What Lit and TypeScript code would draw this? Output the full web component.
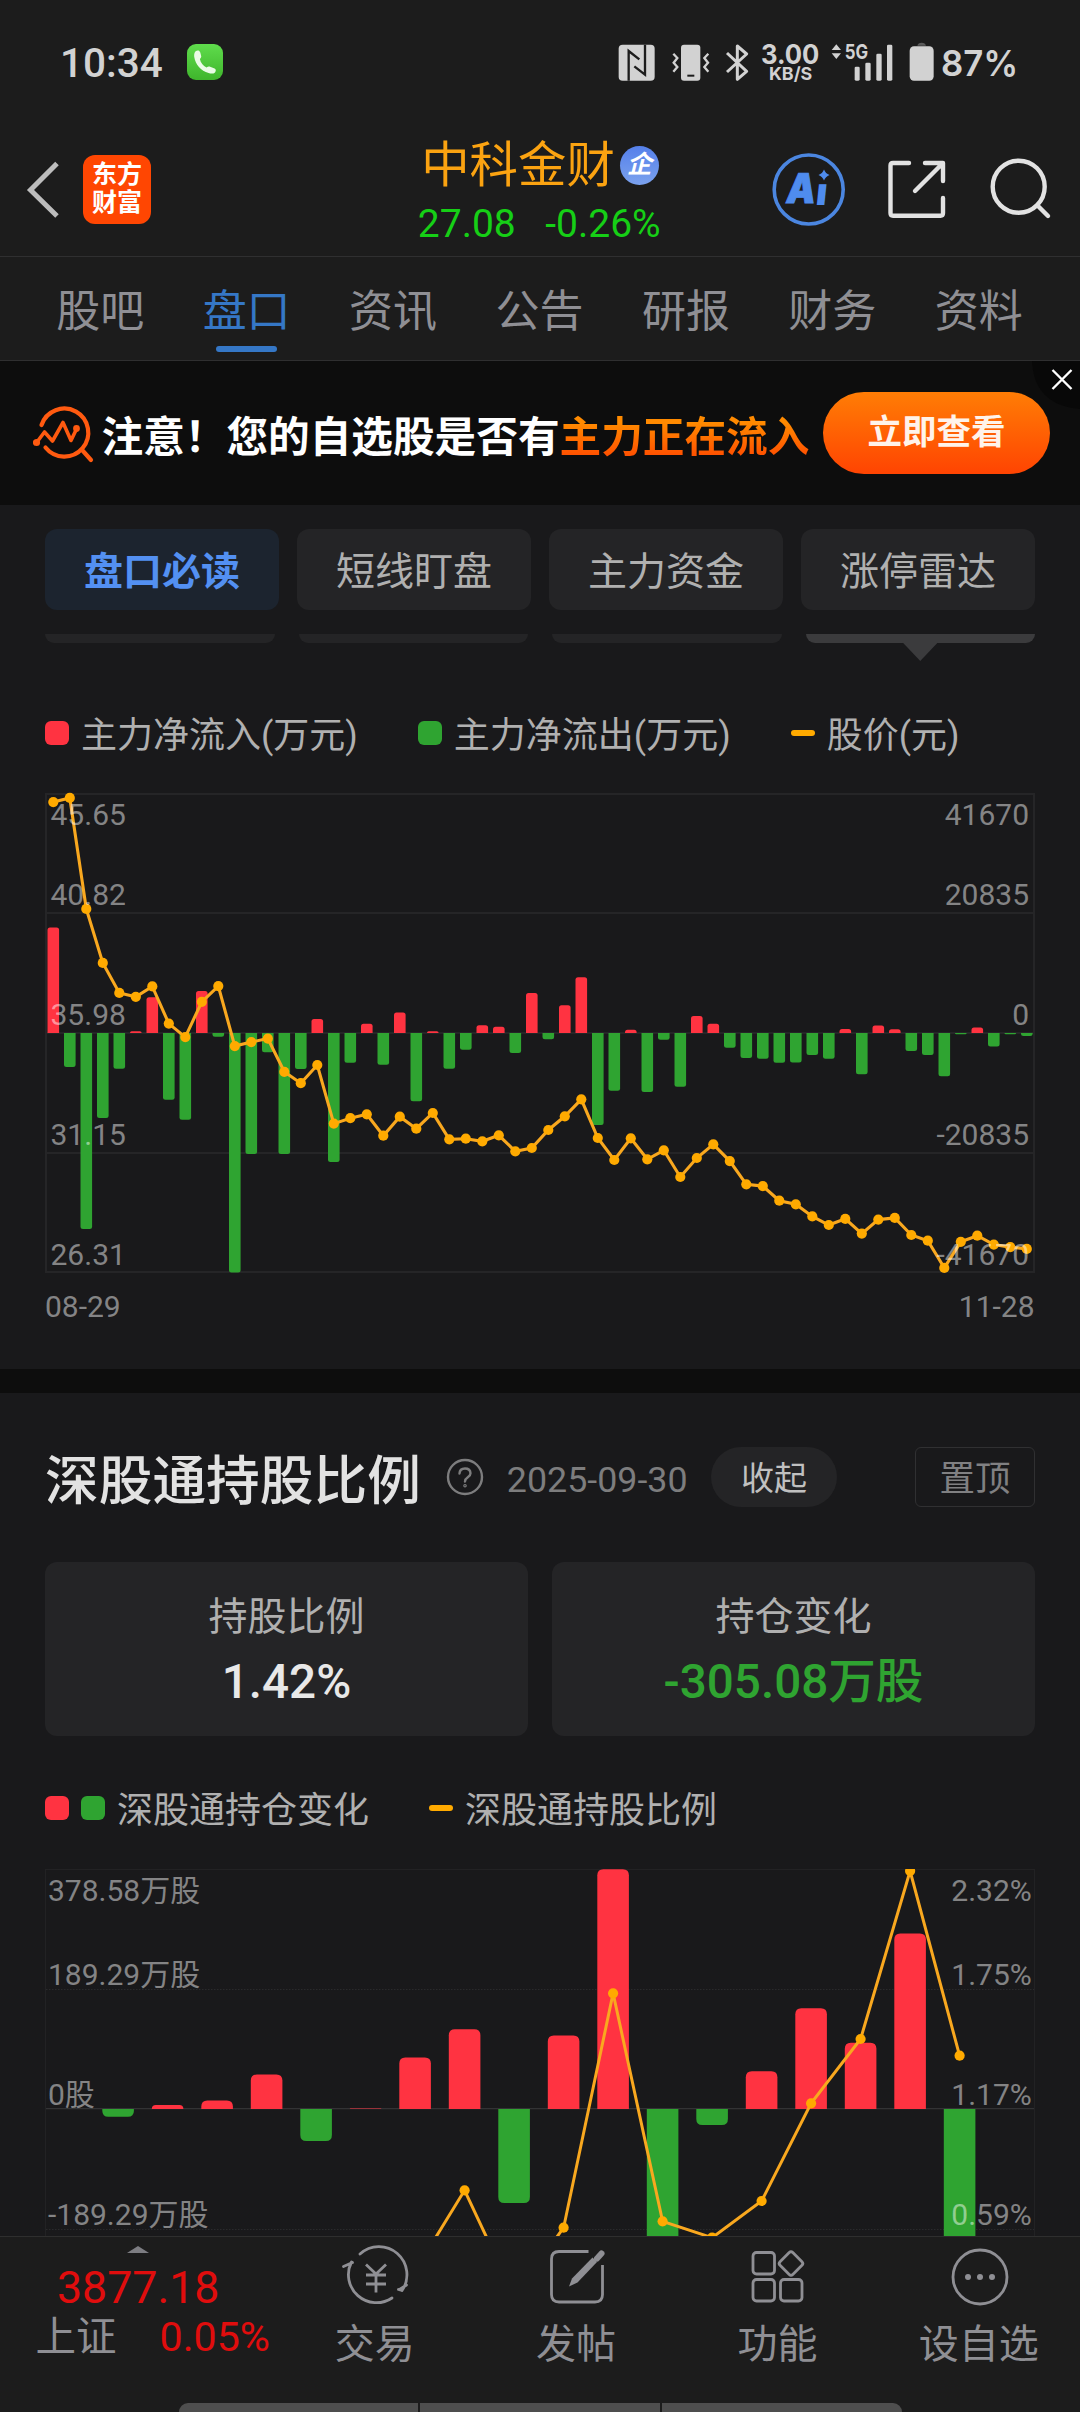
import { LitElement, html, svg, css } from "lit";
import { customElement } from "lit/decorators.js";
import { classMap } from "lit/directives/class-map.js";

const FONT = css`Roboto, "Noto Sans CJK SC", sans-serif`;

// Net main-force flow per trading day, in chart pixels above (+) or below (-) zero.
const FLOW = [
  105.4, -34, -196, -85, -35.7, 1.7, 35.7, -66.8, -86.8, 42, -3.8, -239.5, -121, -19.3, -121, -36, 14, -129, -29.7, 9.3,
  -31.7, 20.5, -68.3, 1.7, -35.7, -16.8, 7.8, 6.2, -20, 40, -6.3, 27.7, 55.7, -92, -57.7, 3.3, -59, -6.8, -53.7, 17,
  9.3, -14.8, -25, -25.8, -29.8, -29.4, -22, -25.8, 4, -41.2, 7.6, 3.8, -18, -22, -43.2, -1.3, 5.6, -13.4, -1.3, -3,
];
// Share price, as distance in pixels below the top frame line.
const PRICE = [
  8.1, 3.9, 114.9, 168.9, 198.9, 202.8, 192.4, 229.6, 243.1, 207.8, 192.1, 252.1, 248.1, 244.6, 277.8, 289.2, 271, 329.6,
  324.2, 320.3, 341.7, 322.7, 334.7, 319, 345.3, 344.7, 347.3, 341.3, 357.3, 354, 336, 322.3, 305.3, 344, 366, 344.3,
  365.3, 356.3, 383, 364, 350.3, 367.1, 390.3, 392.1, 406.7, 410.3, 422.4, 431, 424.9, 439.6, 425.6, 423.9, 441, 446.7,
  473.9, 447.8, 441.7, 450.6, 453.1, 454.9,
];
const HOLD = [0, -7.7, 4, 8.5, 34.5, -32, 0.6, 51.5, 79.7, -94, 73.5, 239.7, -160, -16, 37.8, 100.7, 66.3, 175.5, -160];
const RATIO: [number, number][] = [
  [7, 402], [8, 321.3], [9, 427], [10, 358.7], [11, 124.3], [12, 352.3], [13, 368.7], [14, 332], [15, 234.3], [16, 170],
  [17, 2], [18, 186.7],
];

const RED = "#ff3341";
const GREEN = "#2fa431";
const GOLD = "#ffaa00";

/** Bar whose outer end is rounded and whose base sits square on the zero line. */
function bar(cx: number, zero: number, w: number, v: number, r: number) {
  const h = Math.abs(v);
  const k = Math.min(r, h);
  const s = v > 0 ? -1 : 1;
  const x0 = cx - w / 2;
  const x1 = cx + w / 2;
  const tip = zero + s * h;
  return svg`<path fill=${v > 0 ? RED : GREEN} d="M${x0} ${zero}V${tip - s * k}Q${x0} ${tip} ${x0 + k} ${tip}H${x1 - k}Q${x1} ${tip} ${x1} ${tip - s * k}V${zero}Z"></path>`;
}

@customElement("flow-chart")
class FlowChart extends LitElement {
  static styles = css`
    :host { display: block; }
    svg { display: block; }
    text { font: 30px ${FONT}; fill: #fff; fill-opacity: 0.47; }
    .end { text-anchor: end; }
  `;
  render() {
    const x = (i: number) => 8.3 + 16.5 * i;
    const y = (v: number) => v + 4;
    const left = ["45.65", "40.82", "35.98", "31.15", "26.31"];
    const right = ["41670", "20835", "0", "-20835", "-41670"];
    const base = [34.7, 115, 235, 355, 475];
    return html`<svg width="990" height="540" viewBox="0 0 990 540">
      <g stroke="#252527" stroke-width="2" fill="none">
        <rect x="1" y="4" width="988" height="478"></rect>
        <path d="M1 123H989M1 243H989M1 363H989"></path>
      </g>
      ${FLOW.map((v, i) => bar(x(i), 243, 11.6, v, 2.5))}
      <polyline fill="none" stroke="#f9a81f" stroke-width="3.1" points=${PRICE.map((v, i) => `${x(i)},${y(v)}`).join(" ")}></polyline>
      ${PRICE.map((v, i) => svg`<circle cx=${x(i)} cy=${y(v)} r="5.1" fill=${GOLD}></circle>`)}
      ${left.map((t, i) => svg`<text x="5.5" y=${base[i]}>${t}</text>`)}
      ${right.map((t, i) => svg`<text class="end" x="984" y=${base[i]}>${t}</text>`)}
      <text x="0" y="527">08-29</text>
      <text class="end" x="989.5" y="527">11-28</text>
    </svg>`;
  }
}

@customElement("holding-chart")
class HoldingChart extends LitElement {
  static styles = css`
    :host { display: block; }
    svg { display: block; overflow: hidden; }
    text { font: 30px ${FONT}; fill: #fff; fill-opacity: 0.47; }
    .end { text-anchor: end; }
  `;
  render() {
    const x = (i: number) => 23.6 + 49.5 * i;
    const left = ["378.58万股", "189.29万股", "0股", "-189.29万股"];
    const right = ["2.32%", "1.75%", "1.17%", "0.59%"];
    const base = [32.3, 116.3, 236, 356];
    return html`<svg width="990" height="367" viewBox="0 0 990 367">
      <rect x="0.5" y="0.5" width="989" height="480" fill="none" stroke="#222224"></rect>
      <path d="M1 120.5H989M1 360.5H989" stroke="#2a2a2c" stroke-dasharray="1.5 1.5"></path>
      <path d="M1 239.7H989" stroke="#3a3a3c"></path>
      ${HOLD.map((v, i) => (v ? bar(x(i), 240, 31.6, v, 6) : null))}
      <polyline fill="none" stroke="#f9a81f" stroke-width="3" points=${RATIO.map(([i, v]) => `${x(i)},${v}`).join(" ")}></polyline>
      ${RATIO.map(([i, v]) => svg`<circle cx=${x(i)} cy=${v} r="5.1" fill=${GOLD}></circle>`)}
      ${left.map((t, i) => svg`<text x="3" y=${base[i]}>${t}</text>`)}
      ${right.map((t, i) => svg`<text class="end" x="986.8" y=${base[i]}>${t}</text>`)}
    </svg>`;
  }
}

@customElement("status-bar")
class StatusBar extends LitElement {
  static styles = css`
    :host { display: flex; align-items: center; height: 124px; padding: 0 47px 0 60px; box-sizing: border-box; color: #d2d2d2; }
    .time { font: 500 40.500px/48px ${FONT}; margin-right: 24.500px; padding-top: 2px; }
    .grow { flex: 1; }
    svg { display: block; overflow: visible; }
    .sys { font-family: Inter, sans-serif; font-weight: 600; }
    .sys.b { font-weight: 700; }
  `;
  render() {
    return html`
      <div class="time">10:34</div>
      <svg width="36" height="36" viewBox="0 0 36 36">
        <defs><linearGradient id="g" x1="0" y1="0" x2="0" y2="1"><stop offset="0" stop-color="#5fdc4c"></stop><stop offset="1" stop-color="#3fb52c"></stop></linearGradient></defs>
        <rect width="36" height="36" rx="9" fill="url(#g)"></rect>
        <path fill="#eafbe6" d="M9 7c1.600-1 3.600-.6 4.300 1.500l.9 3.500c.2 1.300-.3 2-1.300 3 .7 4 3.200 6.800 6.600 8.500 1.400-1 2.300-1.300 3.600-.8l4.500 1.900c1.600.9 1.500 2.700.4 3.800-1.600 1.600-3.900 1.400-6.400.7C14 26.800 8.300 20.500 7.200 12.700 7 10.300 7.300 8.300 9 7Z"></path>
      </svg>
      <div class="grow"></div>
      <svg width="420" height="44" viewBox="40 43 1260 132" fill="#d2d2d2">
        <rect x="57" y="57" width="108" height="108" rx="12"></rect>
        <path d="M87 165V76L119 101M136 57V147L104 122" fill="none" stroke="#1c1c1c" stroke-width="7"></path>
        <rect x="244" y="57" width="58" height="108" rx="9"></rect>
        <rect x="263" y="147" width="21" height="6" fill="#1c1c1c"></rect>
        <path d="M221 84L233 97L222 111L233 124L221 138M326 84L314 97L325 111L314 124L326 138" fill="none" stroke="#d2d2d2" stroke-width="7"></path>
        <path d="M382 82L441 137L413 161V61L441 85L382 139" fill="none" stroke="#d2d2d2" stroke-width="9" stroke-linejoin="round"></path>
        <text class="sys b" x="484" y="115" font-size="80" textLength="175" lengthAdjust="spacingAndGlyphs">3.00</text>
        <text class="sys b" x="508" y="162" font-size="54" textLength="130" lengthAdjust="spacingAndGlyphs">KB/S</text>
        <path d="M696 73L710 56L724 73ZM696 83L710 100L724 83Z"></path>
        <text class="sys b" x="735" y="101" font-size="61" textLength="70" lengthAdjust="spacingAndGlyphs">5G</text>
        <rect x="765" y="123" width="15" height="42" rx="4"></rect>
        <rect x="797" y="111" width="16" height="54" rx="4"></rect>
        <rect x="830" y="84" width="16" height="81" rx="4"></rect>
        <rect x="862" y="57" width="16" height="108" rx="4"></rect>
        <path d="M953 60q2-9 13-9t13 9Z" fill="#5a5a5a"></path>
        <rect x="930" y="62" width="72" height="103" rx="13"></rect>
        <text class="sys" x="1024" y="151" font-size="108" textLength="232" lengthAdjust="spacingAndGlyphs">87%</text>
      </svg>`;
  }
}

@customElement("stock-header")
class StockHeader extends LitElement {
  static styles = css`
    :host { display: grid; grid-template-columns: 1fr auto 1fr; height: 133px; box-sizing: border-box; border-bottom: 1.5px solid #2f2f30; font-family: ${FONT}; }
    svg { display: block; }
    .side { display: flex; align-items: center; }
    .left { padding-left: 24px; gap: 21px; }
    .right { justify-content: flex-end; padding-right: 26px; }
    .logo { display: flex; flex-direction: column; justify-content: center; align-items: center; width: 68px; height: 69px; margin-top: -2px; border-radius: 12px; background: #ff4602; color: #fff; font: 700 25px/28px ${FONT}; }
    .mid { display: flex; flex-direction: column; align-items: center; }
    .name { display: flex; align-items: center; gap: 5px; height: 56px; margin-top: 14px; color: #fba311; font-size: 48.400px; line-height: 56px; }
    .badge { width: 39px; height: 39px; border-radius: 50%; background: linear-gradient(#5580ea, #7ba2ee); color: #fff; font: italic 700 25px/38px ${FONT}; text-align: center; margin-top: -1px; }
    .quote { display: flex; gap: 29.500px; color: #16cf16; font-size: 39px; line-height: 50px; margin: 5px 1.500px 0 0; }
  `;
  render() {
    return html`
      <div class="side left">
        <svg width="38" height="60" viewBox="0 0 38 60"><path d="M33 3.500L6.500 30L33 56" fill="none" stroke="#bdbdbd" stroke-width="5"></path></svg>
        <div class="logo"><span>东方</span><span>财富</span></div>
      </div>
      <div class="mid">
        <div class="name"><span>中科金财</span><span class="badge">企</span></div>
        <div class="quote"><span>27.08</span><span>-0.26%</span></div>
      </div>
      <div class="side right">
        <svg width="290" height="80" viewBox="764 150 290 80" fill="none" stroke-linecap="round">
          <circle cx="808.700" cy="189.500" r="34.500" stroke="#4b86e0" stroke-width="3.600"></circle>
          <g fill="#4f8cee">
            <text transform="translate(785 203) skewX(-8)" font-family="Inter, sans-serif" font-weight="900" font-size="41" textLength="29" lengthAdjust="spacingAndGlyphs" stroke="#4f8cee" stroke-width="1">A</text>
            <text transform="translate(815 205) skewX(-6)" font-family="Inter, sans-serif" font-weight="900" font-size="38">ı</text>
            <path d="M824 169.500q1.500 4 5.500 5.500q-4 1.500-5.500 5.500q-1.500-4-5.500-5.500q4-1.500 5.500-5.500Z"></path>
          </g>
          <g stroke="#e2e2e2" stroke-width="4.400" stroke-linejoin="round">
            <path d="M909 163H893Q890.500 163 890.500 165.500V213Q890.500 215.700 893 215.700H940.500Q943 215.700 943 213V198M925 163H943V181M942 164L915 191"></path>
            <circle cx="1018.700" cy="186.700" r="26"></circle>
            <path d="M1037.500 205.500L1048 216"></path>
          </g>
        </svg>
      </div>`;
  }
}

@customElement("promo-banner")
class PromoBanner extends LitElement {
  static styles = css`
    :host { display: flex; align-items: center; position: relative; height: 144px; padding: 0 30px 0 33px; box-sizing: border-box; background: #0d0d0d; font-family: ${FONT}; }
    svg { display: block; }
    .icon { margin-right: 6.500px; }
    .msg { flex: 1; white-space: nowrap; font-weight: 700; font-size: 41.650px; line-height: 56px; color: #fff; padding-top: 9px; }
    .hot { background: linear-gradient(#ff8a00 20%, #ff5200 85%); -webkit-background-clip: text; background-clip: text; color: transparent; }
    .cta { width: 227px; height: 82px; border-radius: 41px; background: linear-gradient(#ff7d05, #ff4402); color: #fff3ea; font-weight: 700; font-size: 34.500px; line-height: 80px; text-align: center; }
    .close { position: absolute; right: 0; top: 0; }
  `;
  render() {
    return html`
      <svg class="icon" width="62" height="60" viewBox="32 402 62 60" fill="none" stroke="#ff5a10" stroke-width="4.200" stroke-linecap="round">
        <path d="M40.500 424A24 24 0 1 1 44.500 446.500M82 450L90 459"></path>
        <path d="M36 441L43.500 431L51.500 440L62 421.500L70 439.500L75.500 428" stroke-linejoin="round" stroke-width="3.600"></path>
        <circle cx="35.500" cy="441.500" r="1.500"></circle><circle cx="75.500" cy="427.500" r="1.300"></circle>
      </svg>
      <div class="msg">注意！您的自选股是否有<span class="hot">主力正在流入</span></div>
      <div class="cta">立即查看</div>
      <svg class="close" width="48" height="48" viewBox="0 0 48 48">
        <path d="M0 0H48V48Q2 44 0 0Z" fill="#080808"></path>
        <path d="M20.500 9L39.500 28M39.500 9L20.500 28" stroke="#fff" stroke-width="2.400"></path>
      </svg>`;
  }
}

@customElement("bottom-bar")
class BottomBar extends LitElement {
  static styles = css`
    :host { display: flex; flex-direction: column; justify-content: space-between; height: 176px; box-sizing: border-box; background: #1c1c1c; border-top: 1px solid #2e2e2e; font-family: ${FONT}; color: #8f8f94; }
    svg { display: block; }
    .row { display: flex; }
    .index { width: 274px; padding-top: 9px; box-sizing: border-box; }
    .arrow { margin-left: 127px; }
    .value { margin-left: 57px; color: #e00d0d; font-size: 44.700px; line-height: 54px; margin-top: 8px; }
    .sub { display: flex; gap: 43px; margin-left: 35.500px; font-size: 40.500px; line-height: 46px; margin-top: -1px; }
    .pct { color: #e00d0d; font-size: 41.200px; }
    .item { width: 201.400px; display: flex; flex-direction: column; align-items: center; padding-top: 5.500px; font-size: 40px; line-height: 48px; gap: 10.500px; }
    .item svg { transform: translateX(1px); }
    .home { display: flex; gap: 2px; width: 723px; height: 9px; margin: 0 auto; border-radius: 9px 9px 0 0; overflow: hidden; }
    .home i { flex: 1; background: #4e4e4e; }
  `;
  render() {
    const icons = [
      ["交易", svg`<path d="M18 11.500A28 28 0 0 1 60 48M50 55.500A28 28 0 0 1 9.500 19.500M1.500 24L10.500 20M64.500 42.500L57.500 47M60 48L56.500 47" transform="translate(0 -.5)"></path><path d="M24 21.500L34 31L44 21.500M24 32H44M24 41H44M34 31V49.500" stroke-linecap="butt"></path>`],
      ["发帖", svg`<path stroke-linecap="butt" d="M45.500 8.500H16Q8.500 8.500 8.500 16V51.500Q8.500 59 16 59H52Q59.500 59 59.500 51.500V22"></path><path d="M58.500 10.500L54 15.500" stroke-width="6"></path><path d="M49.500 14.500L54 19L34.500 39.500L26 43.500L29 35.500Z" fill="#8f8f94" stroke="none"></path>`],
      ["功能", svg`<rect x="9" y="9.500" width="21.500" height="21.500" rx="3.500"></rect><rect x="9" y="36.500" width="21.500" height="21.500" rx="3.500"></rect><rect x="36.500" y="36.500" width="21.500" height="21.500" rx="3.500"></rect><rect x="38" y="11.500" width="18" height="18" rx="2.500" transform="rotate(45 47 20.500)"></rect>`],
      ["设自选", svg`<circle cx="34" cy="34" r="27"></circle><g fill="#8f8f94" stroke="none"><circle cx="22" cy="34" r="3"></circle><circle cx="34" cy="34" r="3"></circle><circle cx="46" cy="34" r="3"></circle></g>`],
    ];
    return html`
      <div class="row">
        <div class="index">
          <svg class="arrow" width="22" height="7" viewBox="0 0 22 7"><path d="M0 7L11 0L22 7Z" fill="#7d7d82"></path></svg>
          <div class="value">3877.18</div>
          <div class="sub"><span>上证</span><span class="pct">0.05%</span></div>
        </div>
        ${icons.map(([t, g]) => html`<div class="item">
          <svg width="68" height="68" viewBox="0 0 68 68" overflow="visible" fill="none" stroke="#8f8f94" stroke-width="2.800" stroke-linecap="round" stroke-linejoin="round">${g}</svg>
          <span>${t}</span>
        </div>`)}
      </div>
      <div class="home"><i></i><i></i><i></i></div>`;
  }
}

@customElement("app-root")
class AppRoot extends LitElement {
  static styles = css`
    :host { display: flex; flex-direction: column; width: 1080px; height: 2412px; overflow: hidden; background: #1c1c1c; font-family: ${FONT}; color: #b5b5b5; }
    .tabs { display: flex; height: 104px; padding: 0 28px 0 27px; box-sizing: border-box; border-bottom: 1.500px solid #2f2f30; font-size: 44px; color: #8f8f94; }
    .tab { flex: 1; display: flex; flex-direction: column; align-items: center; justify-content: space-between; padding: 27px 0 8px; line-height: 56px; }
    .tab.on { color: #3577c6; }
    .tab.on::after { content: ""; width: 61px; height: 6px; border-radius: 3px; background: #3577c6; }
    .panel { background: #19191b; padding: 0 45px; }
    .first { height: 864px; box-sizing: border-box; padding-top: 24px; }
    .chips { display: grid; grid-template-columns: repeat(4, 1fr); gap: 18px; }
    .chip { height: 81px; border-radius: 12px; background: #242426; font-size: 39px; line-height: 86px; text-align: center; color: #b0b0b0; }
    .chip.on { background: #1c242f; color: #5390f2; font-weight: 700; }
    .stubs { display: grid; grid-template-columns: repeat(4, 1fr); gap: 24px; height: 27px; margin-top: 24px; }
    .stub { height: 9px; border-radius: 0 0 12px 12px; background: #242426; }
    .stub.on { background: #3b3b3d; }
    .stub.on::after { content: ""; display: block; width: 36px; height: 27px; margin: 0 auto; background: #3b3b3d; clip-path: polygon(0 30%, 100% 30%, 50% 100%); }
    .legend { display: flex; align-items: center; height: 44px; font-size: 36px; line-height: 44px; color: #b0b0b0; }
    .sq { width: 24px; height: 24px; border-radius: 6px; background: #ff3341; }
    .sq.green { background: #2fa431; }
    .dash { width: 24px; height: 6px; border-radius: 3px; background: #ffaa00; }
    .key { display: flex; align-items: center; gap: 12px; }
    .key span { padding-top: 5px; }
    .one { margin-top: 50px; }
    .one .key + .key { margin-left: 60px; }
    .two { margin-top: 50px; }
    .two .key + .key { margin-left: 60px; }
    .c1 { margin-top: 35px; }
    .c2 { margin-top: 39px; }
    .gap { height: 24px; background: #0d0d0d; }
    .second { flex: 1; min-height: 0; overflow: hidden; padding-top: 54px; }
    .head { display: flex; align-items: center; height: 60px; }
    h2 { margin: 0; font-size: 53.700px; line-height: 60px; font-weight: 500; color: #e2e2e2; white-space: nowrap; padding-top: 10px; }
    .help { display: block; margin-left: 25px; }
    .date { margin-left: 23px; font-size: 35.800px; line-height: 60px; color: #7d7d7e; padding-top: 5px; }
    .fold { width: 126px; height: 60px; border-radius: 30px; background: #242426; font-size: 33px; line-height: 64px; text-align: center; margin-left: 23.500px; color: #c0c0c0; }
    .pin { width: 120px; height: 60px; box-sizing: border-box; border: 1.500px solid #303032; border-radius: 6px; font-size: 35.500px; line-height: 63px; text-align: center; margin-left: auto; color: #808082; }
    .cards { display: grid; grid-template-columns: 1fr 1fr; gap: 24px; margin-top: 55px; }
    .card { height: 174px; box-sizing: border-box; border-radius: 12px; background: #242426; display: flex; flex-direction: column; align-items: center; padding-top: 30px; }
    .card span { font-size: 39px; line-height: 50px; color: #b0b0b0; }
    .card b { font-size: 47.600px; line-height: 60px; font-weight: 500; color: #e8e8e8; margin-top: 10px; }
    .card b.down { color: #2fa431; }
  `;
  render() {
    const tabs = ["股吧", "盘口", "资讯", "公告", "研报", "财务", "资料"];
    const chips = ["盘口必读", "短线盯盘", "主力资金", "涨停雷达"];
    return html`
      <status-bar></status-bar>
      <stock-header></stock-header>
      <nav class="tabs">${tabs.map((t, i) => html`<div class=${classMap({ tab: true, on: i === 1 })}>${t}</div>`)}</nav>
      <promo-banner></promo-banner>
      <section class="panel first">
        <div class="chips">${chips.map((t, i) => html`<div class=${classMap({ chip: true, on: i === 0 })}>${t}</div>`)}</div>
        <div class="stubs">${chips.map((_, i) => html`<div class=${classMap({ stub: true, on: i === 3 })}></div>`)}</div>
        <div class="legend one">
          <div class="key"><div class="sq"></div><span>主力净流入(万元)</span></div>
          <div class="key"><div class="sq green"></div><span>主力净流出(万元)</span></div>
          <div class="key"><div class="dash"></div><span>股价(元)</span></div>
        </div>
        <flow-chart class="c1"></flow-chart>
      </section>
      <div class="gap"></div>
      <section class="panel second">
        <div class="head">
          <h2>深股通持股比例</h2>
          <svg class="help" width="38" height="38" viewBox="0 0 38 38" fill="none" stroke="#7d7d7e" stroke-width="2.400" stroke-linecap="round">
            <circle cx="19" cy="19" r="17"></circle>
            <path d="M13.500 15.500Q13.700 10.500 19 10.500T24.500 15.200Q24.500 17.500 21.800 19.300T19 23.500"></path>
            <circle cx="19" cy="27.700" r="0.600"></circle>
          </svg>
          <span class="date">2025-09-30</span>
          <div class="fold">收起</div>
          <div class="pin">置顶</div>
        </div>
        <div class="cards">
          <div class="card"><span>持股比例</span><b>1.42%</b></div>
          <div class="card"><span>持仓变化</span><b class="down">-305.08万股</b></div>
        </div>
        <div class="legend two">
          <div class="key"><div class="sq"></div><div class="sq green"></div><span>深股通持仓变化</span></div>
          <div class="key"><div class="dash"></div><span>深股通持股比例</span></div>
        </div>
        <holding-chart class="c2"></holding-chart>
      </section>
      <bottom-bar></bottom-bar>`;
  }
}
